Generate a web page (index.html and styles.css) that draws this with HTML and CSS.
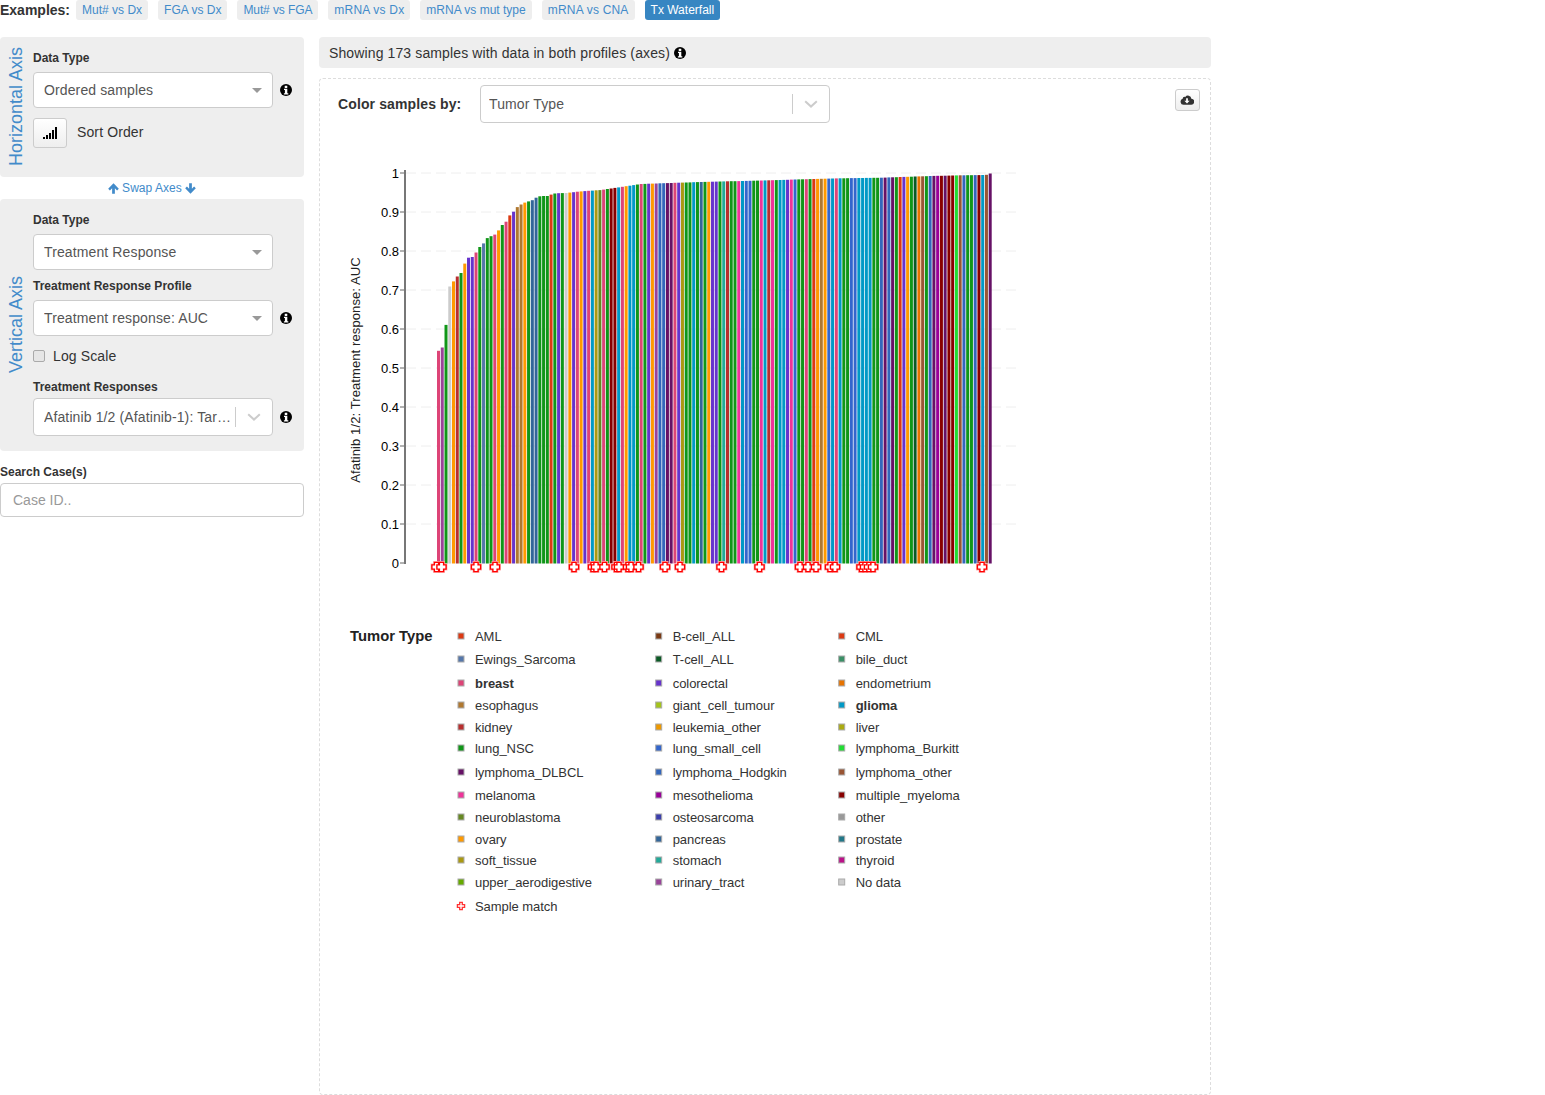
FILE: index.html
```html
<!DOCTYPE html>
<html lang="en">
<head>
    <meta charset="UTF-8">
    <title>Plots</title>
    <link rel="stylesheet" href="styles.css">
</head>
<body>
    <svg class="icon-defs" aria-hidden="true">
        <symbol id="icon-info" viewBox="0 0 14 14">
            <circle cx="7" cy="7" r="6" fill="#000"/>
            <rect x="5.700" y="2.700" width="2.600" height="2.200" rx="0.300" fill="#fff"/>
            <path d="M5 5.700h3.300v4.500h1v1.400H4.900v-1.400h1V7.100H5z" fill="#fff"/>
        </symbol>
        <symbol id="icon-up" viewBox="0 0 12 12">
            <path d="M6 .4 11.800 6.200 9.900 8.100 7.500 5.700v6H4.500v-6L2.100 8.100.2 6.200z"/>
        </symbol>
        <symbol id="icon-down" viewBox="0 0 12 12">
            <path d="M6 11.600.2 5.800 2.100 3.900 4.500 6.300v-6h3v6l2.400-2.400 1.900 1.900z"/>
        </symbol>
        <symbol id="icon-chevron" viewBox="0 0 14 8">
            <path d="M1.200 1.200 7 6.600l5.800-5.400" fill="none" stroke="#ccc" stroke-width="2"/>
        </symbol>
    </svg>

    <div class="examples">
        <strong class="examples-title">Examples:</strong>
        <a class="chip">Mut# vs Dx</a>
        <a class="chip">FGA vs Dx</a>
        <a class="chip tight">Mut# vs FGA</a>
        <a class="chip wide">mRNA vs Dx</a>
        <a class="chip">mRNA vs mut type</a>
        <a class="chip wide">mRNA vs CNA</a>
        <a class="chip active">Tx Waterfall</a>
    </div>

    <div class="main">
        <div class="sidebar">
            <div class="axis-panel horizontal">
                <div class="axis-title"><span>Horizontal Axis</span></div>
                <div class="axis-form">
                    <label class="field-label">Data Type</label>
                    <div class="field-row">
                        <div class="select"><span class="select-text">Ordered samples</span><i class="caret"></i></div>
                        <svg class="info"><use href="#icon-info"/></svg>
                    </div>
                    <div class="sort-row">
                        <button type="button" class="sort-button">
                            <svg width="14" height="12" viewBox="0 0 14 12"><path d="M0 10h2v2H0zM3 8h2v4H3zM6 6h2v6H6zM9 3h2v9H9zM12 0h2v12h-2z"/></svg>
                        </button>
                        <span class="sort-text">Sort Order</span>
                    </div>
                </div>
            </div>

            <div class="swap-axes">
                <svg class="arrow"><use href="#icon-up"/></svg>
                <span>Swap Axes</span>
                <svg class="arrow"><use href="#icon-down"/></svg>
            </div>

            <div class="axis-panel vertical">
                <div class="axis-title"><span>Vertical Axis</span></div>
                <div class="axis-form">
                    <label class="field-label">Data Type</label>
                    <div class="field-row">
                        <div class="select"><span class="select-text">Treatment Response</span><i class="caret"></i></div>
                    </div>
                    <label class="field-label profile-label">Treatment Response Profile</label>
                    <div class="field-row">
                        <div class="select"><span class="select-text">Treatment response: AUC</span><i class="caret"></i></div>
                        <svg class="info"><use href="#icon-info"/></svg>
                    </div>
                    <div class="check-row">
                        <input type="checkbox" class="check">
                        <span>Log Scale</span>
                    </div>
                    <label class="field-label responses-label">Treatment Responses</label>
                    <div class="field-row">
                        <div class="select react-select">
                            <span class="select-text">Afatinib 1/2 (Afatinib-1): Target: ERBB2, EGFR</span>
                            <i class="separator"></i>
                            <svg class="chevron"><use href="#icon-chevron"/></svg>
                        </div>
                        <svg class="info"><use href="#icon-info"/></svg>
                    </div>
                </div>
            </div>

            <label class="field-label search-label">Search Case(s)</label>
            <input type="text" class="search-input" placeholder="Case ID..">
        </div>

        <div class="content">
            <div class="info-bar">
                <span>Showing 173 samples with data in both profiles (axes)</span>
                <svg class="info"><use href="#icon-info"/></svg>
            </div>
            <div class="plot-box">
                <button type="button" class="download-button">
                    <svg width="14" height="11" viewBox="0 0 16 12">
                        <path d="M4 12A3.500 3.500 0 0 1 3 5.200 2.500 2.500 0 0 1 6 3 4 4 0 0 1 13 5 3.500 3.500 0 0 1 12.500 12z"/>
                        <path d="M7 4.500h2v3h2l-3 3-3-3h2z" fill="#fff"/>
                    </svg>
                </button>
                <div class="color-row">
                    <strong class="color-label">Color samples by:</strong>
                    <div class="select react-select color-select">
                        <span class="select-text">Tumor Type</span>
                        <i class="separator"></i>
                        <svg class="chevron"><use href="#icon-chevron"/></svg>
                    </div>
                </div>
                <svg id="chart" class="chart" width="720" height="800" viewBox="320 130 720 800"></svg>
            </div>
        </div>
    </div>

    <script src="chart.js"></script>
</body>
</html>
```

FILE: styles.css
```css
* {
    box-sizing: border-box;
}
body {
    margin: 0;
    font-family: "Liberation Sans", Arial, sans-serif;
    font-size: 14px;
    letter-spacing: 0.12px;
    color: #333;
    background: #fff;
}
.icon-defs {
    display: none;
}
.examples {
    display: flex;
    align-items: center;
    gap: 10px;
    height: 20px;
    margin-bottom: 17px;
    letter-spacing: 0;
}
.examples-title {
    margin-right: -4px;
}
.chip {
    height: 20px;
    padding: 0 6px;
    line-height: 20px;
    font-size: 12px;
    color: #428bca;
    background: #eee;
    border-radius: 3px;
}
.chip.tight {
    letter-spacing: -0.1px;
}
.chip.wide {
    letter-spacing: 0.2px;
}
.chip.active {
    color: #fff;
    background: #3786c2;
}
.main {
    display: flex;
    gap: 15px;
    align-items: flex-start;
}
.sidebar {
    width: 304px;
    flex: none;
}
.axis-panel {
    display: flex;
    background: #eee;
    border-radius: 4px;
}
.axis-panel.horizontal {
    height: 140px;
}
.axis-panel.vertical {
    height: 252px;
}
.axis-title {
    width: 33px;
    flex: none;
    display: flex;
    align-items: center;
    justify-content: center;
    color: #428bca;
    font-size: 18px;
    letter-spacing: 0;
}
.axis-title span {
    writing-mode: vertical-rl;
    transform: rotate(180deg);
    white-space: nowrap;
}
.axis-form {
    flex: 1;
    padding-top: 14px;
}
.field-label {
    display: block;
    height: 14px;
    line-height: 14px;
    margin-bottom: 7px;
    font-size: 12px;
    font-weight: bold;
    letter-spacing: 0;
}
.profile-label {
    margin-top: 9px;
}
.responses-label {
    margin-top: 18px;
    margin-bottom: 4px;
}
.search-label {
    margin-top: 14px;
    margin-bottom: 4px;
}
.field-row {
    display: flex;
    align-items: center;
    gap: 6px;
}
.select {
    position: relative;
    display: flex;
    align-items: center;
    width: 240px;
    height: 36px;
    padding: 0 10px;
    background: #fff;
    border: 1px solid #ccc;
    border-radius: 4px;
    color: #555;
}
.select-text {
    flex: 1;
    min-width: 0;
    overflow: hidden;
    white-space: nowrap;
    text-overflow: ellipsis;
}
.caret {
    position: absolute;
    right: 10px;
    top: 15px;
    border-left: 5px solid transparent;
    border-right: 5px solid transparent;
    border-top: 5px solid #999;
}
.react-select {
    height: 38px;
    padding-right: 0;
}
.separator {
    width: 1px;
    height: 20px;
    margin-left: 4px;
    background: #ccc;
    flex: none;
}
.chevron {
    width: 14px;
    height: 8px;
    margin: 0 11px;
    flex: none;
}
.info {
    width: 14px;
    height: 14px;
    flex: none;
}
.sort-row {
    display: flex;
    align-items: center;
    gap: 10px;
    margin-top: 10px;
}
.sort-text {
    padding-bottom: 2px;
}
.sort-button {
    display: flex;
    align-items: center;
    justify-content: center;
    width: 34px;
    height: 30px;
    padding: 0;
    background: linear-gradient(#fff, #eee);
    border: 1px solid #ccc;
    border-radius: 3px;
}
.swap-axes {
    display: flex;
    align-items: center;
    justify-content: center;
    gap: 3px;
    height: 22px;
    font-size: 12px;
    letter-spacing: 0.05px;
    color: #428bca;
}
.arrow {
    width: 11px;
    height: 11px;
    fill: #428bca;
}
.check-row {
    display: flex;
    align-items: center;
    gap: 8px;
    height: 12px;
    margin-top: 14px;
}
.check {
    appearance: none;
    width: 12px;
    height: 12px;
    margin: 0;
    background: #e6e6e6;
    border: 1px solid #aaa;
    border-radius: 2px;
}
.search-input {
    display: block;
    width: 304px;
    height: 34px;
    padding: 0 12px;
    font: inherit;
    border: 1px solid #ccc;
    border-radius: 4px;
}
.search-input::placeholder {
    color: #999;
}
.content {
    width: 892px;
    flex: none;
}
.info-bar {
    display: flex;
    align-items: center;
    gap: 3px;
    height: 31px;
    padding-left: 10px;
    margin-bottom: 10px;
    background: #eee;
    border-radius: 4px;
}
.plot-box {
    position: relative;
    height: 1017px;
    border: 1px dashed #ddd;
    border-radius: 4px;
}
.download-button {
    position: absolute;
    top: 10px;
    right: 10px;
    display: flex;
    align-items: center;
    justify-content: center;
    width: 25px;
    height: 22px;
    padding: 0 1px 2px 0;
    background: linear-gradient(#fff, #eee);
    border: 1px solid #ccc;
    border-radius: 3px;
}
.download-button svg {
    fill: #333;
}
.color-row {
    display: flex;
    align-items: center;
    padding: 6px 18px 0;
}
.color-label {
    width: 142px;
    flex: none;
}
.color-select {
    width: 350px;
    padding-left: 8px;
}
.color-select .separator {
    margin-left: 5px;
}
.chart {
    display: block;
    margin-top: 7px;
    letter-spacing: 0;
}
.tick-label {
    font-size: 13px;
    fill: #000;
    text-anchor: end;
}
.axis-label {
    font-size: 13px;
    letter-spacing: 0.1px;
    fill: #222;
    text-anchor: middle;
}
.legend-title {
    font-size: 14.8px;
    font-weight: bold;
    fill: #222;
}
.legend-text {
    font-size: 13px;
    letter-spacing: -0.05px;
    fill: #333;
}
.legend-text.bold {
    font-weight: bold;
}
```

FILE: chart.js
```js
const svgNS = 'http://www.w3.org/2000/svg';
const chart = document.getElementById('chart');

const colors = {
    am: '#dc3912', bc: '#7a3a14', ew: '#5577aa', tc: '#0b5a25', bd: '#3a8f66',
    br: '#dd4477', co: '#6633cc', en: '#e67300', es: '#b07830', gi: '#a4c41a',
    gl: '#0099c6', ki: '#b82e2e', le: '#ee9900', li: '#aaaa11', lu: '#109618',
    ls: '#3366cc', bu: '#22dd33', dl: '#661166', ho: '#3366bb', lo: '#995533',
    me: '#ee3399', mm: '#990099', my: '#880000', ne: '#668822', os: '#3b3eac',
    ot: '#999999', ov: '#ff9900', pa: '#336699', pr: '#227788', so: '#aa9911',
    st: '#22aa99', th: '#bb1188', up: '#66aa00', ur: '#994499', nd: '#cccccc'
};

const sequence = (
    'br ur lu nd ov ki lu ov co co br lu ew lu lu br ov lu br am co es es ov lu pa pa lu lu lu am ' +
    'lu co lu nd ov co br ov co br gl so ' +
    'ne br lu my my gl br ov gl gl lu br lu co ov ur ho ho dl dl br co so lu lu gl lu pa lu ov co co ' +
    'lu st ki lu lu me gl ls ls lu lu me gl ki me lu gl gl co me ls lu lu br lu am ov ' +
    'es ov ls gl br gl lu lu ls ls gl gl gl gl lu lu ho dl ho dl lu am co ov lu tc en lo lu ho dl ' +
    'mm my dl my my bu lo ho lu lu ho my gl lo dl'
).split(' ');

// top of the bar at a given x, read off the curve
const curve = [
    [437, 351], [441, 349], [445, 325], [449, 284], [453, 281], [456.6, 276], [460, 273],
    [464, 263], [468, 257], [472, 257], [476, 251], [479.5, 246], [483, 243], [487, 237],
    [491, 236], [495, 234], [498.5, 229], [502, 224], [506, 221], [510, 213], [514, 211],
    [517, 206], [521, 204], [525, 202], [529, 201], [532, 200], [536, 197], [540, 196],
    [548, 196], [551, 194], [555, 193.3], [566, 193], [578, 191.5], [600, 190], [620, 187],
    [640, 184], [660, 183.3], [700, 182], [740, 181], [780, 180], [800, 179.3], [840, 178.3],
    [880, 177.7], [900, 177], [930, 176], [960, 175.3], [985, 175], [989, 173.5]
];

const sampleMatches = [
    436.5, 441.5, 476, 495, 574, 593, 596, 604.5, 616.5, 619, 628, 631, 638.5, 665, 680,
    721.5, 759.5, 800, 808, 816, 830, 835, 861.5, 865, 869, 873, 982
];

const legend = [
    [636, ['am', 'AML'], ['bc', 'B-cell_ALL'], ['am', 'CML']],
    [659, ['ew', 'Ewings_Sarcoma'], ['tc', 'T-cell_ALL'], ['bd', 'bile_duct']],
    [683, ['br', 'breast', true], ['co', 'colorectal'], ['en', 'endometrium']],
    [705, ['es', 'esophagus'], ['gi', 'giant_cell_tumour'], ['gl', 'glioma', true]],
    [727, ['ki', 'kidney'], ['le', 'leukemia_other'], ['li', 'liver']],
    [748, ['lu', 'lung_NSC'], ['ls', 'lung_small_cell'], ['bu', 'lymphoma_Burkitt']],
    [772, ['dl', 'lymphoma_DLBCL'], ['ho', 'lymphoma_Hodgkin'], ['lo', 'lymphoma_other']],
    [795, ['me', 'melanoma'], ['mm', 'mesothelioma'], ['my', 'multiple_myeloma']],
    [817, ['ne', 'neuroblastoma'], ['os', 'osteosarcoma'], ['ot', 'other']],
    [839, ['ov', 'ovary'], ['pa', 'pancreas'], ['pr', 'prostate']],
    [860, ['so', 'soft_tissue'], ['st', 'stomach'], ['th', 'thyroid']],
    [882, ['up', 'upper_aerodigestive'], ['ur', 'urinary_tract'], ['nd', 'No data']]
];

function add(tag, attrs, text) {
    const el = document.createElementNS(svgNS, tag);
    Object.keys(attrs).forEach(key => el.setAttribute(key, attrs[key]));
    if (text) el.textContent = text;
    chart.appendChild(el);
    return el;
}

function topAt(x) {
    for (let i = 1; i < curve.length; i++) {
        if (x <= curve[i][0]) {
            const [x0, y0] = curve[i - 1];
            const [x1, y1] = curve[i];
            return y0 + (y1 - y0) * (x - x0) / (x1 - x0);
        }
    }
    return curve[curve.length - 1][1];
}

function plus(cx, cy, arm, half) {
    const a = arm, h = half;
    return `M${cx - h} ${cy - a}h${2 * h}v${a - h}h${a - h}v${2 * h}h${h - a}v${a - h}h${-2 * h}` +
        `v${h - a}h${h - a}v${-2 * h}h${a - h}z`;
}

// gridlines and ticks
for (let i = 0; i <= 10; i++) {
    const y = 563 - i * 39;
    if (i > 0) {
        add('line', { x1: 406, x2: 1016, y1: y, y2: y, stroke: '#eee', 'stroke-dasharray': '10,5' });
    }
    add('line', { x1: 400, x2: 405, y1: y, y2: y, stroke: '#666' });
    add('text', { class: 'tick-label', x: 399, y: y + 5 }, i === 10 ? '1' : i === 0 ? '0' : (i / 10).toFixed(1));
}

// bars
const pitch = (988.7 - 437) / (sequence.length - 1);
sequence.forEach((key, i) => {
    const x = 437 + i * pitch;
    const top = topAt(x + 0.5);
    add('rect', { x: x.toFixed(2), y: top.toFixed(1), width: 3, height: (563.5 - top).toFixed(1), fill: colors[key] });
});

add('line', { x1: 405, x2: 405, y1: 170, y2: 564, stroke: '#777', 'stroke-width': 2 });
add('text', { class: 'axis-label', transform: 'translate(360 370) rotate(-90)' }, 'Afatinib 1/2: Treatment response: AUC');

// sample match markers
sampleMatches.forEach(x => {
    add('path', { d: plus(x, 567, 4.6, 2.1), fill: '#fff', stroke: '#ffb3b3', 'stroke-width': 2.6 });
});
sampleMatches.forEach(x => {
    add('path', { d: plus(x, 567, 4.6, 2.1), fill: '#fff', stroke: '#f00', 'stroke-width': 1.4 });
});

// legend
add('text', { class: 'legend-title', x: 350, y: 641 }, 'Tumor Type');
const legendCols = [458, 655.7, 838.7];
legend.forEach(([y, ...items]) => {
    items.forEach(([key, label, bold], col) => {
        const x = legendCols[col];
        add('rect', { x: x, y: y - 3, width: 6, height: 6, fill: colors[key], stroke: '#aaa', 'stroke-width': 1 });
        add('text', { class: bold ? 'legend-text bold' : 'legend-text', x: x + 17, y: y + 5 }, label);
    });
});
add('path', { d: plus(461, 906, 3.6, 1.3), fill: '#fff', stroke: '#f33', 'stroke-width': 1.3 });
add('text', { class: 'legend-text', x: 475, y: 911 }, 'Sample match');
```
